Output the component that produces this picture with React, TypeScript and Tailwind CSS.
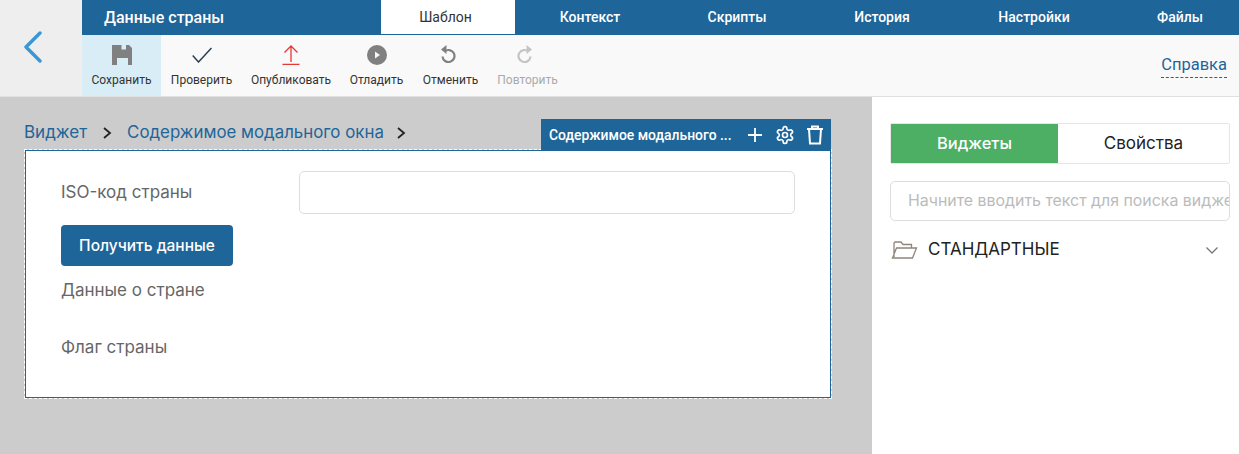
import React from "react";

function ToolButton({ label, icon, active, muted, w }: { label: string; icon: React.ReactNode; active?: boolean; muted?: boolean; w: string }) {
  return (
    <div className={`${w} h-full flex flex-col items-center ${active ? "bg-[#d9edf7]" : ""}`}>
      <div className="h-[38px] w-full flex items-center justify-center pt-[2px]">{icon}</div>
      <div className={`text-[12px] leading-[14px] whitespace-nowrap ${muted ? "text-[#aaaaaa]" : "text-[#333333]"}`}>{label}</div>
    </div>
  );
}

function Tab({ label, active, w }: { label: string; active?: boolean; w: string }) {
  return (
    <div className={`${w} shrink-0 flex items-center justify-center text-[14px] ${active ? "bg-white text-[#333333] h-[34px] self-start pr-[5px]" : "h-full text-white font-medium"}`}>
      {label}
    </div>
  );
}

const inter = { fontFamily: "Inter, sans-serif" };

export default function App() {
  return (
    <div className="w-[1239px] h-[454px] overflow-hidden flex flex-col bg-[#cccccc] text-[#333333]" style={{ fontFamily: "Roboto, sans-serif" }}>
      <header className="flex h-[97px] shrink-0 border-b border-[#e0e0e0]">
        <div className="w-[82px] bg-[#eeeeee] flex items-center pl-[23px] pb-[2px]">
          <svg width="20" height="32" viewBox="0 0 20 32" fill="none"><path d="M17 2 3 16l14 14" stroke="#3b97d3" strokeWidth="3.400" strokeLinecap="round" strokeLinejoin="round" /></svg>
        </div>
        <div className="flex-1 flex flex-col min-w-0">
          <div className="h-[35px] flex bg-[#1e6599] overflow-hidden">
            <div className="w-[299px] shrink-0 pl-[22px] flex items-center text-white text-[16px] font-medium">Данные страны</div>
            <Tab label="Шаблон" active w="w-[134px]" />
            <Tab label="Контекст" w="w-[150px]" />
            <Tab label="Скрипты" w="w-[144px]" />
            <Tab label="История" w="w-[146px]" />
            <Tab label="Настройки" w="w-[158px]" />
            <Tab label="Файлы" w="w-[134px]" />
          </div>
          <div className="flex-1 flex bg-[#f9f9f9] items-stretch">
            <ToolButton w="w-[79px]" active label="Сохранить" icon={
              <svg width="20" height="20" viewBox="0 0 20 20"><path fillRule="evenodd" fill="#808080" d="M0 0h17l3 3v17h-4v-7H5v7H0zM9.500 0v4.500H14V0z" /></svg>
            } />
            <ToolButton w="w-[81px]" label="Проверить" icon={
              <svg width="20" height="16" viewBox="0 0 20 16" fill="none"><path d="M.700 8.500 6.500 15 19.500 1" stroke="#2c3e50" strokeWidth="1.500" /></svg>
            } />
            <ToolButton w="w-[98px]" label="Опубликовать" icon={
              <svg width="18" height="20" viewBox="0 0 18 20" fill="none"><path d="M9 17V1M2.500 7.500 9 1l6.500 6.500M.500 19.300h17" stroke="#e53935" strokeWidth="1.300" /></svg>
            } />
            <ToolButton w="w-[73px]" label="Отладить" icon={
              <svg width="20" height="20" viewBox="0 0 20 20"><circle cx="10" cy="10" r="10" fill="#808080" /><path d="M8 6.500 13 10l-5 3.500z" fill="#f9f9f9" /></svg>
            } />
            <ToolButton w="w-[75px]" label="Отменить" icon={
              <svg className="-ml-[6px] -mt-[2px]" width="16" height="19" viewBox="0 0 16 19" fill="none"><path d="M4.500 6.500a6 6 0 1 1-2 5" stroke="#808080" strokeWidth="2.200" /><path d="M6.500 0 1 4.500 6.500 9z" fill="#808080" /></svg>
            } />
            <ToolButton w="w-[79px]" muted label="Повторить" icon={
              <svg className="-ml-[6px] -mt-[2px]" width="16" height="19" viewBox="0 0 16 19" fill="none"><path d="M11.500 6.500a6 6 0 1 0 2 5" stroke="#c4c4c4" strokeWidth="2.200" /><path d="M9.500 0 15 4.500 9.500 9z" fill="#c4c4c4" /></svg>
            } />
            <div className="ml-auto mr-[12px] mt-[20px] self-start text-[16.500px] leading-[20px] text-[#1e6599] border-b border-dashed border-[#1e6599] pb-[2px]">Справка</div>
          </div>
        </div>
      </header>
      <main className="flex-1 flex min-h-0">
        <section className="w-[872px] shrink-0 pl-[25px] pt-[22px] flex flex-col">
          <div className="w-[806px] h-[31px] flex items-start justify-between relative z-10">
            <div className="flex items-center h-[28px] -ml-[1px] text-[17px] text-[#1e6599]" style={inter}>
              <span>Виджет</span>
              <svg className="mx-[15px]" width="10" height="14" viewBox="0 0 10 14" fill="none"><path d="M2 2l6 5-6 5" stroke="#222222" strokeWidth="1.800" /></svg>
              <span className="text-[16.850px]">Содержимое модального окна</span>
              <svg className="ml-[12px]" width="10" height="14" viewBox="0 0 10 14" fill="none"><path d="M2 2l6 5-6 5" stroke="#222222" strokeWidth="1.800" /></svg>
            </div>
            <div className="w-[290px] h-[32px] bg-[#1e6599] flex items-center pl-[8px] text-white">
              <span className="text-[13.900px] font-medium whitespace-nowrap w-[199px] shrink-0">Содержимое модального ...</span>
              <svg className="-ml-[1px]" width="16" height="16" viewBox="0 0 16 16" fill="none"><path d="M8 1v14M1 8h14" stroke="white" strokeWidth="1.800" /></svg>
              <svg className="ml-[12px]" width="20" height="20" viewBox="0 0 24 24" fill="none" stroke="white" strokeWidth="2" strokeLinecap="round" strokeLinejoin="round"><path d="M12.220 2h-.440a2 2 0 0 0-2 2v.180a2 2 0 0 1-1 1.730l-.430.250a2 2 0 0 1-2 0l-.150-.080a2 2 0 0 0-2.730.730l-.220.380a2 2 0 0 0 .730 2.730l.150.100a2 2 0 0 1 1 1.720v.510a2 2 0 0 1-1 1.740l-.150.090a2 2 0 0 0-.730 2.730l.220.380a2 2 0 0 0 2.730.730l.150-.080a2 2 0 0 1 2 0l.430.250a2 2 0 0 1 1 1.730V20a2 2 0 0 0 2 2h.440a2 2 0 0 0 2-2v-.180a2 2 0 0 1 1-1.730l.430-.250a2 2 0 0 1 2 0l.150.080a2 2 0 0 0 2.730-.730l.220-.390a2 2 0 0 0-.730-2.730l-.150-.080a2 2 0 0 1-1-1.740v-.500a2 2 0 0 1 1-1.740l.150-.090a2 2 0 0 0 .730-2.730l-.220-.380a2 2 0 0 0-2.730-.730l-.150.080a2 2 0 0 1-2 0l-.430-.250a2 2 0 0 1-1-1.730V4a2 2 0 0 0-2-2z" /><circle cx="12" cy="12" r="3" /></svg>
              <svg className="ml-[11px]" width="18" height="20" viewBox="0 0 18 20" fill="none" stroke="white" strokeWidth="2"><path d="M1 4h16M6 4V1.500h6V4M3 4l1 14.500h10L15 4" /></svg>
            </div>
          </div>
          <div className="w-[806px] h-[248px] bg-white border border-[#1e6599] outline-1 outline-dashed outline-white pl-[35px] pr-[35px] pt-[20px]" style={inter}>
            <div className="flex h-[43px]">
              <div className="w-[238px] h-[43px] flex items-center text-[17px] text-[#666666]">ISO-код страны</div>
              <div className="w-[496px] h-[43px] border border-[#dddddd] rounded-[5px] bg-white" />
            </div>
            <div className="mt-[11px] w-[172px] h-[41px] rounded-[4px] bg-[#1e6599] text-white text-[15.500px] font-medium flex items-center justify-center">Получить данные</div>
            <div className="mt-[12px] text-[17px] leading-[24px] text-[#666666]">Данные о стране</div>
            <div className="mt-[33px] text-[17px] leading-[24px] text-[#666666]">Флаг страны</div>
          </div>
        </section>
        <aside className="flex-1 min-w-0 bg-white pl-[18px] pr-[9px] pt-[26px]" style={inter}>
          <div className="flex h-[41px] border border-[#e6e6e6] rounded-[2px]">
            <div className="w-[167px] bg-[#4caf64] text-white text-[16.500px] font-medium flex items-center justify-center">Виджеты</div>
            <div className="flex-1 text-[17px] text-[#222222] flex items-center justify-center">Свойства</div>
          </div>
          <div className="mt-[17px] h-[40px] border border-[#dddddd] rounded-[5px] pl-[17px] flex items-center overflow-hidden whitespace-nowrap text-[15.900px] text-[#bbbbbb]">
            Начните вводить текст для поиска видже
          </div>
          <div className="mt-[15px] h-[28px] flex items-center">
            <svg className="ml-[1px]" width="27" height="20" viewBox="0 0 27 20" fill="none" stroke="#8f8578" strokeWidth="1.300"><path d="M3 17V3.500A1.500 1.500 0 0 1 4.500 2H10l2 2.500h8.500V8M1.500 18h20L25.500 8H5.500z" /></svg>
            <span className="ml-[10px] text-[17px] text-[#222222]">СТАНДАРТНЫЕ</span>
            <svg className="ml-auto mr-[11px]" width="14" height="9" viewBox="0 0 14 9" fill="none"><path d="M1.500 1.500 7 7l5.500-5.500" stroke="#777777" strokeWidth="1.300" /></svg>
          </div>
        </aside>
      </main>
    </div>
  );
}
